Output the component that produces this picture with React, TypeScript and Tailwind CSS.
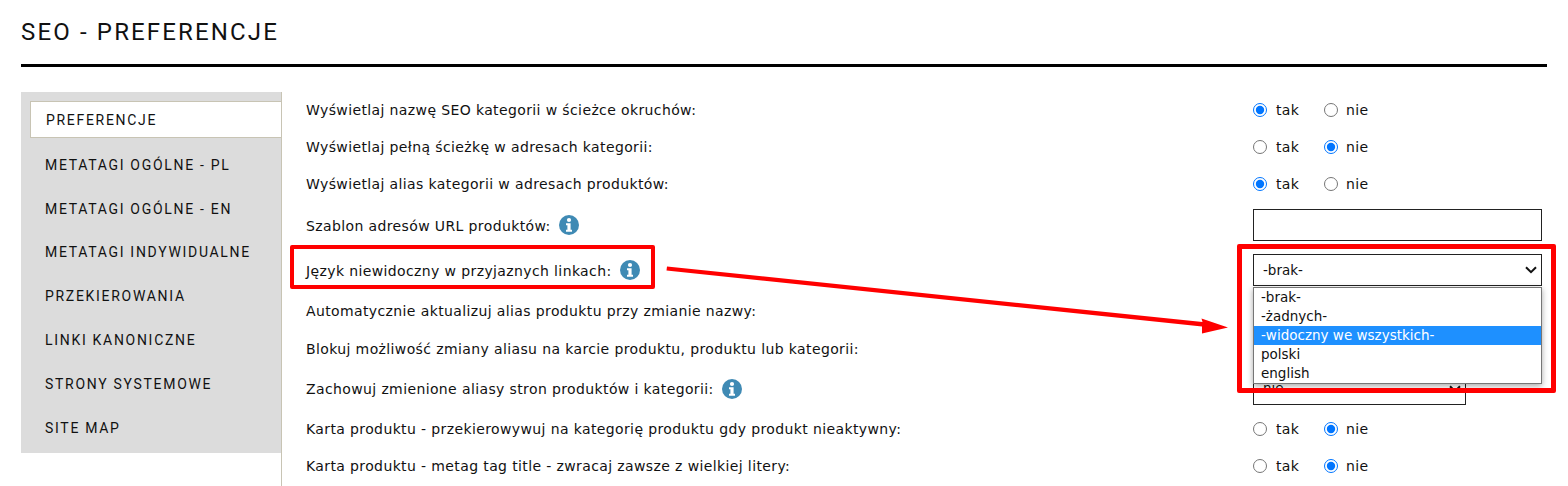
const menu = [
  "METATAGI OGÓLNE - PL",
  "METATAGI OGÓLNE - EN",
  "METATAGI INDYWIDUALNE",
  "PRZEKIEROWANIA",
  "LINKI KANONICZNE",
  "STRONY SYSTEMOWE",
  "SITE MAP",
];

const options = ["-brak-", "-żadnych-", "-widoczny we wszystkich-", "polski", "english"];

function InfoIcon() {
  return (
    <svg width="20" height="20" viewBox="0 0 20 20" className="shrink-0">
      <circle cx="10" cy="10" r="10" fill="#3f8ab4" />
      <circle cx="10" cy="5" r="2.1" fill="#fff" />
      <path d="M7 8.2h4.6v6.6h1.4v2H7v-2h1.4v-4.6H7z" fill="#fff" />
    </svg>
  );
}

function Radios({ name, value }: { name: string; value: "tak" | "nie" }) {
  return (
    <div className="flex w-[289px] items-center">
      <label className="flex w-[71px] items-center">
        <input type="radio" name={name} defaultChecked={value === "tak"} className="m-0 h-[14px] w-[14px]" />
        <span className="ml-[9px] pt-[2px]">tak</span>
      </label>
      <label className="flex items-center">
        <input type="radio" name={name} defaultChecked={value === "nie"} className="m-0 h-[14px] w-[14px]" />
        <span className="ml-[8px] pt-[2px]">nie</span>
      </label>
    </div>
  );
}

function Select({ value, width }: { value: string; width: string }) {
  return (
    <div className={`relative h-[32px] ${width}`}>
      <select className="h-full w-full appearance-none rounded-none border border-[#222] bg-white pl-[9px] text-[13.5px] tracking-normal">
        <option>{value}</option>
      </select>
      <svg width="12" height="8" viewBox="0 0 12 8" className="pointer-events-none absolute top-[12px] right-[5px]">
        <path d="M1 1.2l5 5 5-5" fill="none" stroke="#111" strokeWidth="2" />
      </svg>
    </div>
  );
}

function Row({ label, info, height, children }: { label: string; info?: boolean; height: string; children: React.ReactNode }) {
  return (
    <div className={`flex items-center justify-between ${height}`}>
      <div className="flex items-center gap-[8px]">
        <span className="pt-[2px]">{label}</span>
        {info && <InfoIcon />}
      </div>
      {children}
    </div>
  );
}

export default function App() {
  return (
    <div className="relative h-[486px] w-[1568px] overflow-hidden bg-white text-[#111] [font-family:'DejaVu_Sans',sans-serif] text-[14px] tracking-[0.38px]">
      <h1 className="mx-[21px] h-[67px] border-b-[3px] border-black pt-[16px] text-[24px] leading-[32px] tracking-[2.15px] [font-family:Roboto,sans-serif]">
        SEO - PREFERENCJE
      </h1>

      <div className="mt-[25px] ml-[21px] flex h-[394px] items-start">
        <nav className="h-[361px] w-[260px] bg-[#dcdcdc] pt-[9px] pl-[9px] text-[14px] tracking-[1.7px] [font-family:Roboto,sans-serif]">
          <div className="flex h-[37px] items-center border border-r-0 border-[#c8c4b4] bg-white pt-[1px] pl-[15px]">PREFERENCJE</div>
          <ul className="pt-[5.4px]">
            {menu.map((item) => (
              <li key={item} className="flex h-[43.8px] items-center pl-[15px]">{item}</li>
            ))}
          </ul>
        </nav>

        <div className="h-[394px] w-[1266px] border-l border-[#c8c4b4] pr-[5px] pl-[24px]">
          <div className="-mt-[1px]">
            <Row label="Wyświetlaj nazwę SEO kategorii w ścieżce okruchów:" height="h-[37px]"><Radios name="a" value="tak" /></Row>
            <Row label="Wyświetlaj pełną ścieżkę w adresach kategorii:" height="h-[37px]"><Radios name="b" value="nie" /></Row>
            <Row label="Wyświetlaj alias kategorii w adresach produktów:" height="h-[37px]"><Radios name="c" value="tak" /></Row>
            <Row label="Szablon adresów URL produktów:" info height="h-[46px]">
              <input className="h-[32px] w-[289px] border border-[#222] bg-white" />
            </Row>
            <Row label="Język niewidoczny w przyjaznych linkach:" info height="h-[44px]">
              <Select value="-brak-" width="w-[289px]" />
            </Row>
            <Row label="Automatycznie aktualizuj alias produktu przy zmianie nazwy:" height="h-[37px]"><div className="w-[289px]" /></Row>
            <Row label="Blokuj możliwość zmiany aliasu na karcie produktu, produktu lub kategorii:" height="h-[38px]"><div className="w-[289px]" /></Row>
            <Row label="Zachowuj zmienione aliasy stron produktów i kategorii:" info height="h-[43px]">
              <div className="w-[289px]">
                <Select value="nie" width="w-[213px]" />
              </div>
            </Row>
            <Row label="Karta produktu - przekierowywuj na kategorię produktu gdy produkt nieaktywny:" height="h-[37px]"><Radios name="d" value="nie" /></Row>
            <Row label="Karta produktu - metag tag title - zwracaj zawsze z wielkiej litery:" height="h-[37px]"><Radios name="e" value="nie" /></Row>
          </div>
        </div>
      </div>

      {/* open dropdown */}
      <ul className="absolute top-[287px] left-[1253px] w-[289px] border border-[#767676] bg-white text-[13.5px] tracking-normal shadow-[0_2px_6px_rgba(0,0,0,0.35)]">
        {options.map((o, i) => (
          <li key={o} className={`h-[19px] pl-[7px] leading-[18px] ${i === 2 ? "bg-[#1e90ff] text-white" : ""}`}>{o}</li>
        ))}
      </ul>

      {/* red annotations */}
      <div className="absolute top-[245px] left-[290px] h-[44px] w-[365px] rounded-[2px] border-[4px] border-[#ff0000]" />
      <div className="absolute top-[244px] left-[1237px] h-[149px] w-[319px] rounded-[2px] border-[5px] border-[#ff0000]" />
      <svg className="absolute top-0 left-0" width="1568" height="486">
        <path d="M667 266.5 L1202.5 322 L1201.5 318.5 L1228 327.5 L1202 333.5 L1202 326.5 L666.5 270.5 Z" fill="#ff0000" />
      </svg>
    </div>
  );
}
